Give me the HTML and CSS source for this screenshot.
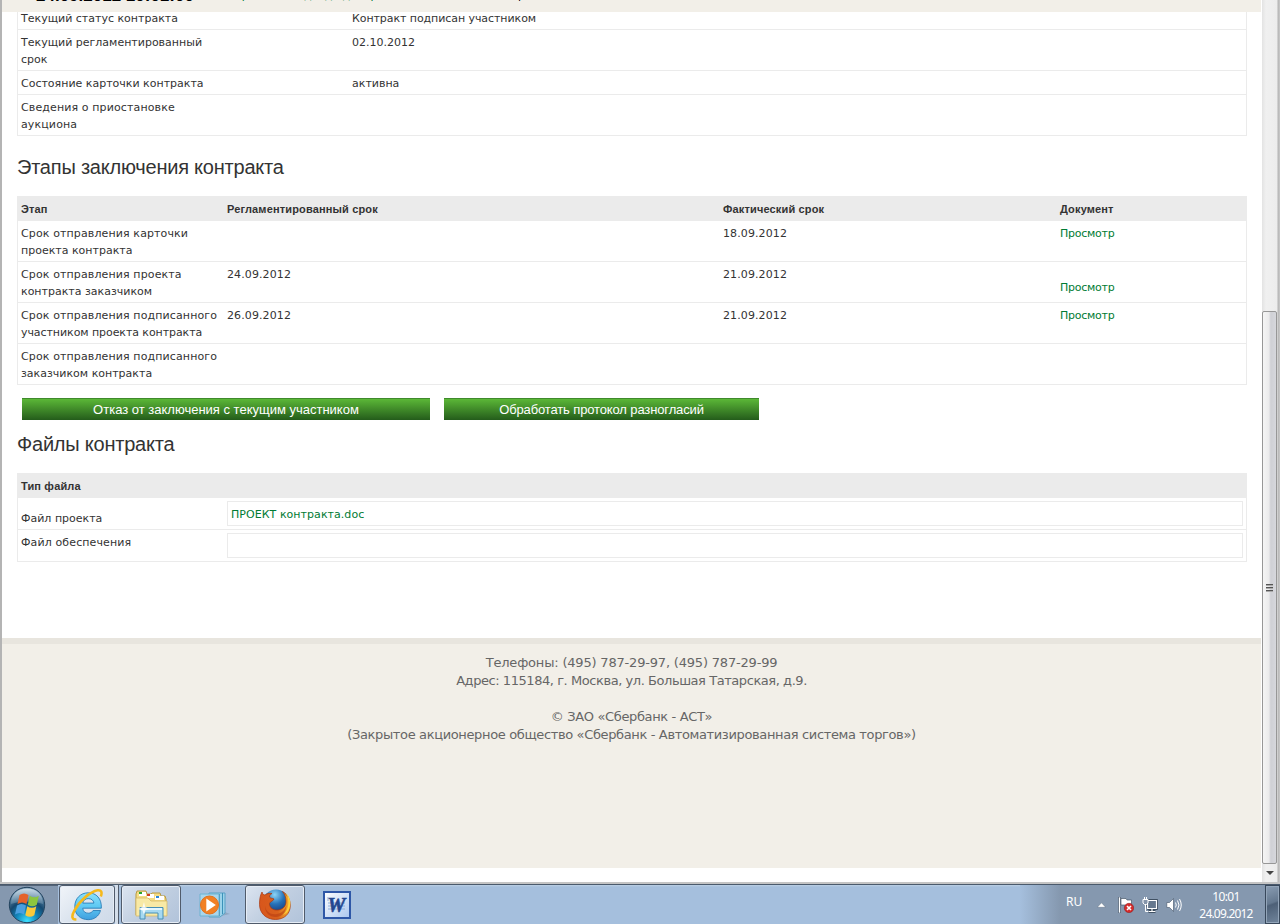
FILE: index.html
```
<!DOCTYPE html>
<html lang="ru">
<head>
  <meta charset="UTF-8" />
  <title>Карточка контракта</title>
  <link rel="stylesheet" href="styles.css">
</head>
<body>

  <div class="browser">
    <div class="page">
      <div class="topbar">
        <span class="clock">24.09.2012 10:01:00</span>
        <span class="top-link">Выбор места подхода доборов</span>
        <span class="top-user">Номер</span>
      </div>

      <div class="content">
        <table class="grid info">
          <tr><td>Текущий статус контракта</td><td class="status">Контракт подписан участником</td></tr>
          <tr><td>Текущий регламентированный<br>срок</td><td>02.10.2012</td></tr>
          <tr><td>Состояние карточки контракта</td><td>активна</td></tr>
          <tr><td class="wide">Сведения о приостановке<br>аукциона</td><td></td></tr>
        </table>

        <h2 class="stages-title">Этапы заключения контракта</h2>
        <table class="grid stages">
          <tr><th>Этап</th><th>Регламентированный срок</th><th>Фактический срок</th><th>Документ</th></tr>
          <tr><td><span class="wide">Срок отправления карточки</span><br>проекта контракта</td><td></td><td>18.09.2012</td><td><a href="#">Просмотр</a></td></tr>
          <tr><td><span class="wide">Срок отправления проекта</span><br>контракта заказчиком</td><td>24.09.2012</td><td>21.09.2012</td><td class="low"><a href="#">Просмотр</a></td></tr>
          <tr><td><span class="wide">Срок отправления подписанного</span><br><span class="narrow">участником проекта контракта</span></td><td>26.09.2012</td><td>21.09.2012</td><td><a href="#">Просмотр</a></td></tr>
          <tr><td><span class="wide">Срок отправления подписанного</span><br>заказчиком контракта</td><td></td><td></td><td></td></tr>
        </table>

        <div class="buttons">
          <button class="btn btn-refuse">Отказ от заключения с текущим участником</button>
          <button class="btn btn-protocol">Обработать протокол разногласий</button>
        </div>

        <h2 class="files-title">Файлы контракта</h2>
        <table class="grid files">
          <tr><th>Тип файла</th><th></th></tr>
          <tr><td class="file-label">Файл проекта</td><td><div class="file-box"><a href="#">ПРОЕКТ контракта.doc</a></div></td></tr>
          <tr><td class="wide">Файл обеспечения</td><td><div class="file-box"></div></td></tr>
        </table>
      </div>

      <div class="footer">
        <p class="phones">Телефоны: (495) 787-29-97, (495) 787-29-99</p>
        <p class="address">Адрес: 115184, г. Москва, ул. Большая Татарская, д.9.</p>
        <p>&nbsp;</p>
        <p>© ЗАО «Сбербанк - АСТ»</p>
        <p>(Закрытое акционерное общество «Сбербанк - Автоматизированная система торгов»)</p>
      </div>
    </div>

    <div class="scrollbar">
      <div class="thumb"><i></i><i></i><i></i></div>
      <div class="arrow"><svg width="8" height="4" viewBox="0 0 8 4"><path d="M0 0h8L4 4z" fill="#444"/></svg></div>
    </div>
  </div>

  <div class="taskbar">
    <div class="start">
      <svg width="38" height="38" viewBox="0 0 38 38">
        <defs>
          <radialGradient id="orb" cx=".5" cy=".95" r=".85">
            <stop offset="0" stop-color="#3ee0ff"/><stop offset=".35" stop-color="#1488bd"/><stop offset=".65" stop-color="#15486f"/><stop offset="1" stop-color="#6f93ae"/>
          </radialGradient>
          <linearGradient id="orbTop" x1="0" y1="0" x2="0" y2="1">
            <stop offset="0" stop-color="#d5e3ed" stop-opacity=".9"/><stop offset="1" stop-color="#8ba9c0" stop-opacity=".35"/>
          </linearGradient>
        </defs>
        <circle cx="19" cy="19" r="17.700" fill="url(#orb)" stroke="#24445f"/>
        <path d="M3 18C3 8 10 2.500 19 2.500S35 8 35 18c-9-3-23-3-32 0z" fill="url(#orbTop)"/>
        <path d="M11.500 9c3-2 6-2 9 0l-2 9c-3-2-6-2-9 0z" fill="#e4622c"/>
        <path d="M21.800 9.700c3 2 6 2 9 0l-2 9c-3 2-6 2-9 0z" fill="#8cc63e"/>
        <path d="M9 19.500c3-2 6-2 9 0l-2 9c-3-2-6-2-9 0z" fill="#4a9fe0"/>
        <path d="M19.300 20.200c3 2 6 2 9 0l-2 9c-3 2-6 2-9 0z" fill="#fbc93b"/>
      </svg>
    </div>

    <div class="task task-ie">
      <svg width="32" height="34" viewBox="0 0 30 32">
        <defs><linearGradient id="ie" x1="0" y1="0" x2="0" y2="1"><stop offset="0" stop-color="#8be0fb"/><stop offset=".5" stop-color="#5fc9f3"/><stop offset="1" stop-color="#3f9fdf"/></linearGradient></defs>
        <path d="M28.500 19H11c.2 3.200 2.400 4.700 5.200 4.700 2.200 0 3.600-.9 4.500-2.500h7c-1.500 5.500-6 8.600-11.500 8.600C8.800 29.800 3.500 25 3.500 17.500S8.800 4.500 16.200 4.500c7.500 0 12.800 5.500 12.300 14.500zM11 14.200h10.500c-.3-2.800-2.600-4.200-5.300-4.200s-4.700 1.500-5.200 4.200z" fill="url(#ie)" stroke="#2379b5" stroke-width=".8"/>
        <path d="M5 29.500C1 30 0 27 3 21.500 8 12 18 3.500 25 2.200c3.500-.6 4.500 2 3 5.800" fill="none" stroke="#f6b91c" stroke-width="2.400"/>
      </svg>
    </div>
    <div class="task-stack"></div>

    <div class="task task-explorer">
      <svg width="34" height="32" viewBox="0 0 34 32">
        <path d="M2 5l1-3h9l1 3h4l1-1h8l1 3h4l1 3v16H2z" fill="#f4dc85" stroke="#b99a45"/>
        <path d="M5 3h7v4H5zM13 5h7v4h-7zM21 7h9v4h-9z" fill="#fff"/>
        <path d="M5 3h3v2H5z" fill="#27a52d"/><path d="M13 5h3v2h-3z" fill="#cf3b23"/><path d="M22 7h3v2h-3z" fill="#2b86d9"/>
        <path d="M2 9h12l3 3h16v15H2z" fill="#f8e9a5" stroke="#d2b662" stroke-width=".7"/>
        <path d="M6 30V18.500h23V30h-5v-6H11v6z" fill="#a6d9f1" stroke="#468fb6"/>
        <path d="M7 20h21" stroke="#e4f7ff" stroke-width="2"/>
        <path d="M10 13l1.200 5 4.500 2-4.500 1.500L10 26l-1.500-4.500L4 20l4.500-2z" fill="#fff" opacity=".8"/>
      </svg>
    </div>

    <div class="task-plain task-player">
      <svg width="32" height="28" viewBox="0 0 32 28">
        <path d="M17 26l14-3-8-3z" fill="#7e97af" opacity=".6"/>
        <path d="M10 2h16v20l-5 4H10z" fill="#9bd3ea" stroke="#58a1c5"/>
        <path d="M20.500 3v22M23.500 2v21" stroke="#3c91b9"/>
        <path d="M1 3h19v22H1z" fill="#a9d6ec" stroke="#6cb2d1"/>
        <circle cx="10.500" cy="14" r="9" fill="#f18024" stroke="#e2701c"/>
        <path d="M7.300 7.500l9.500 6.500-9.500 6.500z" fill="#fff"/>
      </svg>
    </div>

    <div class="task task-firefox">
      <svg width="34" height="34" viewBox="0 0 34 34">
        <defs>
          <radialGradient id="globe" cx=".45" cy=".2" r=".8"><stop offset="0" stop-color="#8bd4f6"/><stop offset=".45" stop-color="#2672b8"/><stop offset="1" stop-color="#142b6b"/></radialGradient>
          <linearGradient id="fox" x1="0" y1="0" x2="1" y2="0"><stop offset="0" stop-color="#d8561c"/><stop offset=".6" stop-color="#d9601c"/><stop offset="1" stop-color="#f5b52e"/></linearGradient>
        </defs>
        <circle cx="18" cy="14.500" r="13" fill="url(#globe)"/>
        <path d="M4 4c.5 2 1.500 3 3 3 2-1.500 4-2 7-1.500-2 1-2.500 2-2.500 3.500 1 1.500 3 1 4.500 2-.5 2-4 2.500-4.500 4.500 0 4.500 4 7 8.500 6.500 5-.5 8-4 8-8.500 0-4-1-7-3.500-10 5 3 7.800 8 7.800 14C32.300 26 26 31.500 17.500 31.500 8 31.500 1.500 25 1.500 16.500c0-5 .5-9 2.500-12.500z" fill="url(#fox)" stroke="#a8370e" stroke-width=".7"/>
        <path d="M7 18c1 6 6 9 12 8 5-1 8-4 9.500-9-.5 8-5 12-11 12S7 25 7 18z" fill="#b53b13" opacity=".55"/>
        <path d="M28 5c4 8 3 16-3 22 5-2 7.300-7 7.300-12S30 7 28 5z" fill="#ffd23b"/>
      </svg>
    </div>

    <div class="task-plain task-word">
      <svg width="28" height="28" viewBox="0 0 28 28">
        <defs><linearGradient id="word" x1="0" y1="0" x2="1" y2="1"><stop offset="0" stop-color="#fff"/><stop offset="1" stop-color="#a9c6ef"/></linearGradient></defs>
        <rect x="1" y="1" width="26" height="26" fill="url(#word)" stroke="#2e57a7" stroke-width="2"/>
        <path d="M5 6v4M5 12h17M5 15h17M5 18h17" stroke="#8faedb"/>
        <text x="13.500" y="21" text-anchor="middle" class="word-letter">W</text>
      </svg>
    </div>

    <div class="tray">
      <span class="lang">RU</span>
      <svg class="tray-up" width="9" height="6" viewBox="0 0 9 6"><path d="M.3 5.300L4.500.8 8.700 5.300z" fill="#fff" stroke="#4d5e72" stroke-width=".4"/></svg>
      <svg class="tray-flag" width="16" height="16" viewBox="0 0 16 16">
        <path d="M.5 0h2v16h-2z" fill="#fff" stroke="#38485a" stroke-width=".6"/>
        <path d="M3 1.500h5l1 1.500h4.500v6.500H9L8 8H3z" fill="#fff" stroke="#38485a" stroke-width=".6"/>
        <circle cx="11" cy="11" r="4.700" fill="#d52b2b" stroke="#8f1717" stroke-width=".5"/>
        <path d="M9 9l4 4M13 9l-4 4" stroke="#fff" stroke-width="1.600"/>
      </svg>
      <svg class="tray-net" width="16" height="16" viewBox="0 0 16 16">
        <path d="M5.500 3.500h9v8h-9zM10 12v2M6.500 14.500h7" fill="none" stroke="#2a3a4b" stroke-width="2.600"/>
        <path d="M5.500 3.500h9v8h-9zM10 12v2M6.500 14.500h7" fill="#66788e" stroke="#fff" stroke-width="1.200"/>
        <path d="M1 2.500h5V6L4.500 7.500h-2L1 6zM2.500 0v3M4.500 0v3M3.500 7v7.500H6" fill="#8595aa" stroke="#fff"/>
      </svg>
      <svg class="tray-sound" width="16" height="16" viewBox="0 0 16 16">
        <path d="M.8 5.500h2.700L7.500 1.500v13l-4-4H.8z" fill="#fff" stroke="#405065" stroke-width=".6"/>
        <path d="M9.500 5.500q1.500 2.500 0 5M11.500 3.500q3 4.500 0 9M13.500 2q3.500 6 0 12" fill="none" stroke="#fff"/>
      </svg>
      <div class="time"><span class="t-hour">10:01</span><span class="t-date">24.09.2012</span></div>
      <div class="show-desktop"></div>
    </div>
  </div>

</body>
</html>
```
FILE: styles.css
```
* {
  margin: 0;
  padding: 0;
  box-sizing: border-box;
}

body {
  width: 1280px;
  height: 924px;
  overflow: hidden;
  background: #fff;
  font-family: "DejaVu Sans", sans-serif;
  font-size: 11px;
  color: #333;
}

a {
  color: #007b33;
  text-decoration: none;
}

.browser {
  display: flex;
  height: 882px;
  border-left: 2px solid #b4b4b4;
}

.page {
  width: 1260px;
  height: 882px;
  display: flex;
  flex-direction: column;
}

/* scrolled header, only its lower edge stays in view */
.topbar {
  position: relative;
  flex: none;
  display: flex;
  align-items: flex-end;
  width: 1259px;
  height: 12px;
  padding-bottom: 8px;
  padding-left: 34px;
  overflow: hidden;
  background: #f2efe8;
  white-space: nowrap;
}

.clock {
  width: 176px;
  margin-bottom: -2px;
  font: bold 17px/20px "Liberation Sans", Arial, sans-serif;
  color: #000;
}

.top-link {
  width: 276px;
  margin-bottom: 2px;
  line-height: 13px;
  color: #007b33;
}

.top-user {
  margin-bottom: 2px;
  line-height: 13px;
  color: #000;
}

.content {
  height: 626px;
  padding-left: 15px;
  margin-top: -6px;
  flex: none;
}

.grid {
  width: 1230px;
  table-layout: fixed;
  border-spacing: 0;
  border-left: 1px solid #ebebeb;
  border-right: 1px solid #ebebeb;
}

.grid td {
  padding: 4px 3px 2px;
  border-bottom: 1px solid #ebebeb;
  line-height: 17px;
  vertical-align: top;
  white-space: nowrap;
}

.grid th {
  height: 25px;
  padding: 1px 3px 0;
  background: #ebebeb;
  text-align: left;
  font: bold 11px/17px "Liberation Sans", Arial, sans-serif;
  letter-spacing: 0.15px;
}

.wide {
  letter-spacing: 0.12px;
}

.narrow,
.status {
  letter-spacing: -0.07px;
}

.stages td:nth-child(2),
.stages td:nth-child(3) {
  letter-spacing: 0.1px;
}

.stages a {
  letter-spacing: -0.25px;
}

.info tr {
  height: 24px;
}

.info td:first-child {
  width: 331px;
}

.grid .low {
  padding-top: 17px;
}

.stages th:nth-child(1),
.files th:nth-child(1) {
  width: 206px;
}

.stages th:nth-child(2) {
  width: 496px;
}

.stages th:nth-child(3) {
  width: 337px;
}

h2 {
  font: 20px/24px "Liberation Sans", Arial, sans-serif;
  letter-spacing: -0.22px;
  color: #333;
}

.stages-title {
  margin: 19px 0 17px;
}

.files-title {
  margin: 12px 0 17px;
}

.buttons {
  display: flex;
  gap: 14px;
  padding: 13px 0 0 5px;
}

.btn {
  height: 22px;
  border: 0;
  border-top: 1px solid #3f8a2c;
  background: linear-gradient(#5bb737, #245c1b);
  color: #fff;
  font: 13px/20px "Liberation Sans", Arial, sans-serif;
}

.btn-refuse {
  width: 408px;
}

.btn-protocol {
  width: 315px;
  letter-spacing: -0.13px;
}

.files td:nth-child(2) {
  padding: 3px;
}

.file-box {
  height: 25px;
  padding: 4px 3px 2px;
  border: 1px solid #ebebeb;
  letter-spacing: 0.05px;
}

.grid .file-label {
  padding-top: 12px;
}

.footer {
  flex: none;
  width: 1259px;
  height: 230px;
  padding-top: 10px;
  margin-top: 6px;
  border-top: 6px solid #e8e5de;
  background: #f2efe8;
  text-align: center;
  color: #666;
  font-size: 13px;
  line-height: 18px;
  letter-spacing: -0.36px;
}

.phones {
  letter-spacing: -0.19px;
}

.address {
  letter-spacing: -0.44px;
}

.scrollbar {
  display: flex;
  flex-direction: column;
  width: 18px;
  padding: 311px 2px 0 0;
  background: linear-gradient(90deg, #e3e3e3, #f0f0f0 4px, #ececec 15px, #b5b5b5 16px, #c9c9c9);
}

.thumb {
  display: flex;
  flex-direction: column;
  align-items: center;
  justify-content: center;
  gap: 1px;
  width: 15px;
  height: 553px;
  border: 1px solid #979797;
  border-radius: 2px;
  background: linear-gradient(90deg, #f5f5f5, #ebebec 45%, #cfd0d5 60%, #d6d7dc);
}

.thumb i {
  width: 7px;
  height: 2px;
  border-top: 1px solid #555;
  border-bottom: 1px solid #aaa;
}

.arrow {
  display: flex;
  align-items: center;
  justify-content: center;
  height: 18px;
}

.taskbar {
  display: flex;
  height: 42px;
  padding-top: 1px;
  border-top: 2px solid #c4c4c4;
  background: linear-gradient(#4a5a6c 1px, #bccfe3 1px, #a5bfdd 3px);
}

.start {
  width: 58px;
  padding-left: 8px;
  background: #8598af;
  border-top: 1px solid #536377;
}

.task {
  display: flex;
  align-items: center;
  justify-content: center;
  height: 39px;
  border: 1px solid #505b6b;
  border-radius: 3px;
  background: linear-gradient(135deg, #dbe4f0, #c1cfe1 50%, #b1c3da);
  box-shadow: inset 0 0 0 1px #e6edf6;
}

.task-ie {
  width: 56px;
  margin-left: 1px;
  background: linear-gradient(135deg, #f1f4f9, #dae3ee 50%, #cedae9);
}

.task-stack {
  width: 4px;
  height: 39px;
  border-right: 1px solid #505b6b;
  background: #d4deea;
}

.task-explorer {
  width: 60px;
  margin-left: 2px;
}

.task-plain {
  display: flex;
  align-items: center;
}

.task-player {
  width: 64px;
  padding-left: 18px;
}

.task-firefox {
  width: 60px;
}

.task-word {
  padding-left: 18px;
}

.word-letter {
  font: italic bold 20px "Liberation Serif", serif;
  fill: #24468f;
  stroke: #24468f;
  stroke-width: .6px;
}

.tray {
  display: flex;
  align-items: center;
  width: 260px;
  margin-left: auto;
  padding-left: 46px;
  background: linear-gradient(90deg, #a5bfdd, #8598af 40px);
  color: #fff;
}

.tray svg {
  flex: none;
}

.lang {
  flex: none;
  width: 31px;
  margin-top: -6px;
  font: 12px "Noto Sans", sans-serif;
}

.tray-flag {
  margin-left: 12px;
}

.tray-net,
.tray-sound {
  margin-left: 8px;
}

.time {
  flex: none;
  display: flex;
  flex-direction: column;
  align-items: center;
  width: 76px;
  margin-left: 6px;
  font: 12px/17px "Noto Sans", sans-serif;
}

.t-date {
  letter-spacing: -0.8px;
}

.t-hour {
  letter-spacing: -0.6px;
}

.show-desktop {
  flex: none;
  width: 15px;
  height: 39px;
  margin-left: auto;
  border: 1px solid #38485b;
  background: linear-gradient(160deg, #8a9db3, #64788f 45%, #4d6077 50%, #71859c);
  box-shadow: inset 0 0 0 1px #93a5b9;
}
```
